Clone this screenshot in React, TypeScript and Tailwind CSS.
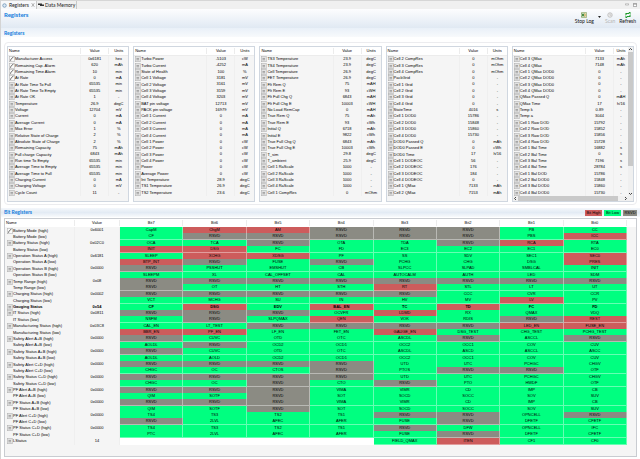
import { clsx } from "clsx"

type Reg = [name: string, value: string, units: string]

const REGISTERS: Reg[][] = [
  [
    ["Manufacturer Access", "0x6181", "hex"],
    ["Remaining Cap. Alarm", "620", "mAh"],
    ["Remaining Time Alarm", "10", "min"],
    ["At Rate", "0", "mA"],
    ["At Rate Time To Full", "65535", "min"],
    ["At Rate Time To Empty", "65535", "min"],
    ["At Rate OK", "1", "-"],
    ["Temperature", "26.9", "degC"],
    ["Voltage", "12704", "mV"],
    ["Current", "0", "mA"],
    ["Average Current", "0", "mA"],
    ["Max Error", "1", "%"],
    ["Relative State of Charge", "2", "%"],
    ["Absolute State of Charge", "2", "%"],
    ["Remaining Capacity", "75", "mAh"],
    ["Full charge Capacity", "6843", "mAh"],
    ["Run time To Empty", "65535", "min"],
    ["Average Time to Empty", "65535", "min"],
    ["Average Time to Full", "65535", "min"],
    ["Charging Current", "0", "mA"],
    ["Charging Voltage", "0", "mV"],
    ["Cycle Count", "11", "-"],
  ],
  [
    ["Turbo Power", "-5103", "cW"],
    ["Turbo Current", "-4252", "mA"],
    ["State of Health", "100", "%"],
    ["Cell 1 Voltage", "3181", "mV"],
    ["Cell 2 Voltage", "3161", "mV"],
    ["Cell 3 Voltage", "3159", "mV"],
    ["Cell 4 Voltage", "3203", "mV"],
    ["BAT pin voltage", "12713", "mV"],
    ["PACK pin voltage", "16979", "mV"],
    ["Cell 1 Current", "0", "mA"],
    ["Cell 2 Current", "0", "mA"],
    ["Cell 3 Current", "0", "mA"],
    ["Cell 4 Current", "0", "mA"],
    ["Cell 1 Power", "0", "cW"],
    ["Cell 2 Power", "0", "cW"],
    ["Cell 3 Power", "0", "cW"],
    ["Cell 4 Power", "0", "cW"],
    ["Power", "0", "cW"],
    ["Average Power", "0", "cW"],
    ["Int Temperature", "28.9", "degC"],
    ["TS1 Temperature", "26.9", "degC"],
    ["TS2 Temperature", "23.6", "degC"],
  ],
  [
    ["TS3 Temperature", "23.9", "degC"],
    ["TS4 Temperature", "23.9", "degC"],
    ["Cell Temperature", "26.9", "degC"],
    ["FET Temperature", "26.9", "degC"],
    ["Flt Rem Q", "75", "mAH"],
    ["Flt Rem E", "93", "cWH"],
    ["Flt Full Chg Q", "6843", "mAH"],
    ["Flt Full Chg E", "10003", "cWH"],
    ["No Load RemCap", "0", "mAH"],
    ["True Rem Q", "75", "mAh"],
    ["True Rem E", "93", "cWh"],
    ["Initial Q", "6718", "mAh"],
    ["Initial E", "9822", "cWh"],
    ["True Full Chg Q", "6843", "mAh"],
    ["True Full Chg E", "10003", "cWh"],
    ["T_sim", "29.8", "degC"],
    ["T_ambient", "25.9", "degC"],
    ["Cell 1 RaScale", "1000", "-"],
    ["Cell 2 RaScale", "1000", "-"],
    ["Cell 3 RaScale", "1000", "-"],
    ["Cell 4 RaScale", "1000", "-"],
    ["Cell 1 CompRes", "0", "mOhm"],
  ],
  [
    ["Cell 2 CompRes", "0", "mOhm"],
    ["Cell 3 CompRes", "0", "mOhm"],
    ["Cell 4 CompRes", "0", "mOhm"],
    ["PackGrid", "0", "-"],
    ["Cell 1 Grid", "0", "-"],
    ["Cell 2 Grid", "0", "-"],
    ["Cell 3 Grid", "0", "-"],
    ["Cell 4 Grid", "0", "-"],
    ["StateTime", "4016", "s"],
    ["Cell 1 DOD0", "15786", "-"],
    ["Cell 2 DOD0", "15848", "-"],
    ["Cell 3 DOD0", "15860", "-"],
    ["Cell 4 DOD0", "15730", "-"],
    ["DOD0 Passed Q", "0", "mAh"],
    ["DOD0 Passed E", "0", "cWh"],
    ["DOD0 Time", "17", "h/16"],
    ["Cell 1 DODEOC", "56", "-"],
    ["Cell 2 DODEOC", "176", "-"],
    ["Cell 3 DODEOC", "184", "-"],
    ["Cell 4 DODEOC", "0", "-"],
    ["Cell 1 QMax", "7133", "mAh"],
    ["Cell 2 QMax", "7153", "mAh"],
  ],
  [
    ["Cell 3 QMax", "7133", "mAh"],
    ["Cell 4 QMax", "7148", "mAh"],
    ["Cell 1 QMax DOD0", "0", "-"],
    ["Cell 2 QMax DOD0", "0", "-"],
    ["Cell 3 QMax DOD0", "0", "-"],
    ["Cell 4 QMax DOD0", "0", "-"],
    ["QMax Passed Q", "0", "mAH"],
    ["QMax Time", "17", "h/16"],
    ["Temp k", "0.89", "-"],
    ["Temp a", "3044", "-"],
    ["Cell 1 Raw DOD", "15792", "-"],
    ["Cell 2 Raw DOD", "15852", "-"],
    ["Cell 3 Raw DOD", "15856", "-"],
    ["Cell 4 Raw DOD", "15728", "-"],
    ["Cell 1 Bal Time", "16882", "s"],
    ["Cell 2 Bal Time", "0", "s"],
    ["Cell 3 Bal Time", "7196", "s"],
    ["Cell 4 Bal Time", "28784", "s"],
    ["Cell 1 Bal DOD", "15786", "-"],
    ["Cell 2 Bal DOD0", "15848", "-"],
    ["Cell 3 Bal DOD0", "15860", "-"],
    ["Cell 4 Bal DOD0", "15730", "-"],
  ],
]

// name | value | bits 7..0, "!" marks a bit that is set, "." an unused one
const BIT_ROWS = [
  "Battery Mode (high)|0x6001|CapM !ChgM !AM RSVD RSVD RSVD PB CC",
  "Battery Mode (low)||CF RSVD RSVD RSVD RSVD RSVD PBS !ICC",
  "Battery Status (high)|0x02C0|OCA TCA RSVD OTA TDA RSVD !RCA RTA",
  "Battery Status (low)||!INIT !DSG FC FD EC3 EC2 EC1 EC0",
  "Operation Status A (high)|0x6181|SLEEP !XCHG !XDSG PF SS SDV SEC1 !SEC0",
  "Operation Status A (low)||!BTP_INT RSVD FUSE RSVD PCHG CHG DSG !PRES",
  "Operation Status B (high)|0x0000|RSVD PSSHUT EMSHUT CB SLPCC SLPAD SMBLCAL INIT",
  "Operation Status B (low)||SLEEPM XL CAL_OFFSET CAL AUTOCALM AUTH LED SDM",
  "Temp Range (high)|0x08|RSVD RSVD RSVD RSVD RSVD RSVD RSVD RSVD",
  "Temp Range (low)||RSVD OT HT STH !RT STL LT UT",
  "Charging Status (high)|0x0002|RSVD RSVD RSVD RSVD RSVD CCC CVR CCR",
  "Charging Status (low)||VCT MCHG SU IN HV MV !LV PV",
  "Gauging Status|0x54|CF !DSG EDV !BAL_EN TC !TD FC FD",
  "IT Status (high)|0x0811|RSVD RSVD RSVD OCVFR !LDMD RX QMAX VDQ",
  "IT Status (low)||NSFM RSVD SLPQMAX !QEN VOK RDIS RSVD !REST",
  "Manufacturing Status (high)|0x03C8|CAL_EN LT_TEST RSVD RSVD RSVD RSVD !LED_EN !FUSE_EN",
  "Manufacturing Status (low)||!BBR_EN !PF_EN LF_EN FET_EN !GAUGE_EN DSG_TEST CHG_TEST PCHG_TEST",
  "Safety Alert A+B (high)|0x0000|RSVD CUVC OTD OTC ASCDL RSVD ASCCL RSVD",
  "Safety Alert A+B (low)||AOLDL RSVD OCD2 OCD1 OCC2 OCC1 COV CUV",
  "Safety Status A+B (high)|0x0000|RSVD CUVC OTD OTC ASCDL ASCD ASCCL ASCC",
  "Safety Status A+B (low)||AOLDL AOLD OCD2 OCD1 OCC2 OCC1 COV CUV",
  "Safety Alert C+D (high)|0x0000|RSVD RSVD RSVD RSVD UTD UTC PCHGC CHGV",
  "Safety Alert C+D (low)||CHGC OC CTOS RSVD PTOS RSVD RSVD OTF",
  "Safety Status C+D (high)|0x0000|RSVD RSVD RSVD RSVD UTD UTC PCHGC CHGV",
  "Safety Status C+D (low)||CHGC OC RSVD CTO RSVD PTO HWDF OTF",
  "PF Alert A+B (high)|0x0000|RSVD RSVD RSVD VIMA VIMR CD IMP CB",
  "PF Alert A+B (low)||QIM SOTF RSVD SOT SOCD SOCC SOV SUV",
  "PF Status A+B (high)|0x0000|RSVD RSVD RSVD VIMA VIMR CD IMP CB",
  "PF Status A+B (low)||QIM SOTF RSVD SOT SOCD SOCC SOV SUV",
  "PF Alert C+D (high)|0x0000|TS4 TS3 TS2 TS1 RSVD RSVD OPNCELL RSVD",
  "PF Alert C+D (low)||RSVD 2LVL AFEC AFER FUSE RSVD DFETF CFETF",
  "PF Status C+D (high)|0x0000|TS4 TS3 TS2 TS1 RSVD DFW OPNCELL IFC",
  "PF Status C+D (low)||PTC 2LVL AFEC AFER FUSE RSVD DFETF CFETF",
  "LStatus|14|. . . . FIELD_QMAX !ITEN CF1 CF0",
].map((line) => {
  const [name, value, bits] = line.split("|")
  return { name, value, bits: bits.split(" ") }
})

function ReadIcon() {
  return (
    <svg viewBox="0 0 12 12" className="w-1.5 h-1.5 shrink-0">
      <rect x="0.5" y="0.5" width="10" height="11" fill="#e2e2e2" stroke="#adadad" />
      <path d="M3 5h5M3 7.5h5" stroke="#858585" strokeWidth="1.3" />
    </svg>
  )
}

function EditIcon() {
  return (
    <svg viewBox="0 0 12 12" className="w-1.5 h-1.5 shrink-0">
      <rect x="0.5" y="0.5" width="10" height="11" fill="#fafafa" stroke="#a8a8a8" />
      <path d="M3 9.5l1-3L9 1.5" stroke="#444" strokeWidth="1.6" fill="none" />
    </svg>
  )
}

function Chevron({ d }: { d: string }) {
  return (
    <svg viewBox="0 0 10 10" className="w-[5px] h-[5px] shrink-0">
      <path d={d} fill="none" stroke="#444" strokeWidth="2" />
    </svg>
  )
}

function RegisterTable({ rows, editable, scroll }: { rows: Reg[]; editable: number; scroll?: boolean }) {
  const cols = scroll ? "grid-cols-[minmax(0,1fr)_29px_14px]" : "grid-cols-[minmax(0,1fr)_29px_19px]"
  return (
    <div className="flex flex-col min-w-0 border border-[#d0d7e0] bg-[#f5f5f5]">
      <div className="flex flex-1">
        <table className="flex-1 min-w-0 flex flex-col">
          <thead className="block bg-white border-b border-[#ececec]">
            <tr className={clsx("grid h-2 items-center", cols)}>
              <th className="font-normal text-left pl-px">Name</th>
              <th className="font-normal text-center border-x border-[#ececec]">Value</th>
              <th className="font-normal text-center">Units</th>
            </tr>
          </thead>
          <tbody className="grid auto-rows-fr h-[140px]">
            {rows.map(([name, value, units], i) => (
              <tr key={name} className={clsx("grid min-h-0", cols)}>
                <td className="flex items-center pl-px">
                  {i < editable ? <EditIcon /> : <ReadIcon />}
                  {name}
                </td>
                <td className="text-center border-x border-[#efefef]">{value}</td>
                <td className="text-center">{units}</td>
              </tr>
            ))}
          </tbody>
        </table>
        {scroll && (
          <div className="w-[5px] flex flex-col items-center bg-[#f0f0f0]">
            <Chevron d="M2 6l3-3 3 3" />
            <div className="w-full h-[114px] bg-[#c9c9c9]" />
            <div className="flex-1" />
            <Chevron d="M2 4l3 3 3-3" />
          </div>
        )}
      </div>
      {scroll ? (
        <div className="h-[5px] flex items-center bg-[#f0f0f0] pr-[5px]">
          <Chevron d="M6 2L3 5l3 3" />
          <div className="h-full w-[100px] bg-[#c9c9c9]" />
          <div className="flex-1" />
          <Chevron d="M4 2l3 3-3 3" />
        </div>
      ) : (
        <div className="h-[5px]" />
      )}
    </div>
  )
}

function bitColor(bit: string) {
  if (bit === ".") return "bg-white"
  if (bit === "RSVD") return "bg-[#8b8b83]"
  return bit.startsWith("!") ? "bg-[#cd5c5c]" : "bg-[#00ff80]"
}

function BitTable() {
  const cols = "grid-cols-[69px_46px_repeat(8,minmax(0,1fr))_9px]"
  return (
    <table className="flex flex-col mx-[3px] mt-px pb-3 border border-[#c9ccd1] bg-[#f5f5f5]">
      <thead className="block bg-white">
        <tr className={clsx("grid h-2 items-center", cols)}>
          <th className="font-normal text-left pl-px">Name</th>
          <th className="font-normal text-center border-x border-[#ececec]">Value</th>
          {[7, 6, 5, 4, 3, 2, 1, 0].map((n) => (
            <th key={n} className="font-normal text-center border-r border-[#ececec]">Bit{n}</th>
          ))}
        </tr>
      </thead>
      <tbody className="grid auto-rows-fr h-[217px]">
        {BIT_ROWS.map(({ name, value, bits }, row) => (
          <tr key={name} className={clsx("grid min-h-0", cols, name === "Gauging Status" && "font-bold")}>
            <td className={clsx("flex items-center", value ? "pl-0.5" : "pl-2")}>
              {value && (row === 0 ? <EditIcon /> : <ReadIcon />)}
              {name}
            </td>
            <td className="text-center border-x border-[#efefef]">{value}</td>
            {bits.map((bit, i) => (
              <td key={i} className={clsx("text-center border-r border-b", bit === "." ? "border-white" : "border-white/40", bitColor(bit))}>
                {bit.replace(/[!.]/, "")}
              </td>
            ))}
          </tr>
        ))}
      </tbody>
    </table>
  )
}

export default function App() {
  return (
    <div className="min-h-screen bg-white border-l border-[#d4d4d4] font-['Liberation_Sans',Arial,sans-serif] text-[4px] leading-[6px] text-black whitespace-nowrap">
      {/* Tabs */}
      <div className="flex items-stretch h-[9px] bg-[#f0f0f0] border-t border-[#d6d6d6] font-['Lato',sans-serif] text-[5px] leading-[8px] text-[#222]">
        <button className="flex items-center gap-0.5 px-px bg-[#f7f8fa]">
          <svg viewBox="0 0 10 10" className="w-[5px] h-[5px]">
            <circle cx="5" cy="5" r="3.5" fill="#dce9f5" stroke="#6f93b5" strokeWidth="1.6" />
          </svg>
          Registers
          <svg viewBox="0 0 10 10" className="w-1 h-1">
            <path d="M2 1l6 8M8 1L2 9" stroke="#888" strokeWidth="2.4" />
            <path d="M2 1l6 8M8 1L2 9" stroke="#fff" strokeWidth="0.8" />
          </svg>
        </button>
        <button className="flex items-center gap-px px-px border-x border-[#c8c8c8]">
          <svg viewBox="0 0 12 8" className="w-[6px] h-1">
            <path d="M0 1h8v2h4v3H4V4H0z" fill="#333" />
          </svg>
          Data Memory
        </button>
        <div className="flex flex-1 items-center justify-end gap-1 pr-[3px]">
          <button aria-label="Minimize">
            <svg viewBox="0 0 10 10" className="w-1 h-1"><path d="M1 2h8v3H1z" fill="#fff" stroke="#777" /></svg>
          </button>
          <button aria-label="Maximize">
            <svg viewBox="0 0 10 10" className="w-1 h-1"><path d="M1 1h8v8H1zM1 3h8" fill="#fff" stroke="#777" strokeWidth="1.5" /></svg>
          </button>
        </div>
      </div>

      {/* Title and actions */}
      <header className="flex items-start justify-between h-[19px] px-[3px] bg-linear-to-b from-[#fdfdfe] to-[#e0e9f3] font-['Lato',sans-serif]">
        <h1 className="text-[6px] leading-[12px] font-bold text-[#0f7bdc]">Registers</h1>
        <div className="flex items-start gap-1 pt-[3px] pr-px text-[5px] leading-[6px] text-[#111]">
          <button className="flex flex-col items-center">
            <svg viewBox="0 0 12 12" className="w-[6px] h-[6px]">
              <path d="M1 1h10v10H1z" fill="#e8f0d8" stroke="#6c8a3c" />
              <path d="M2 3l4 6M6 3L2 9" stroke="#2f7d32" strokeWidth="2" />
              <path d="M8 3v6" stroke="#c78f2a" strokeWidth="2" />
            </svg>
            Stop Log
          </button>
          <button aria-label="Log options" className="pt-1">
            <svg viewBox="0 0 6 4" className="w-[3px] h-0.5"><path d="M0 0h6L3 4z" fill="#222" /></svg>
          </button>
          <button className="flex flex-col items-center text-[#b5b5b5]">
            <svg viewBox="0 0 12 12" className="w-[6px] h-[6px]">
              <circle cx="6" cy="6" r="4.5" fill="#ededed" stroke="#b5b5b5" strokeWidth="1.5" />
              <path d="M6 3v3.5h3" fill="none" stroke="#b5b5b5" strokeWidth="1.2" />
            </svg>
            Scan
          </button>
          <button className="flex flex-col items-center">
            <svg viewBox="0 0 12 12" className="w-[6px] h-[6px]">
              <path d="M2 6V3h6M10 6v3H4" fill="none" stroke="#1f9a2c" strokeWidth="2.2" />
              <path d="M7 0h4v6zM5 12H1V6z" fill="#1f9a2c" />
            </svg>
            Refresh
          </button>
        </div>
      </header>

      <h2 className="h-[9px] px-[3px] bg-linear-to-b from-[#e9f0f8] to-[#f8fafc] font-['Lato',sans-serif] text-[5px] leading-[10px] font-bold text-[#0f7bdc]">Registers</h2>

      <section className="mx-[3px] mt-[5px] px-0.5 pt-[3px] pb-0.5 border border-[#ececef] rounded-sm grid grid-cols-5 gap-1">
        {REGISTERS.map((rows, i) => (
          <RegisterTable key={i} rows={rows} editable={i === 0 ? 4 : 0} scroll={i === 4} />
        ))}
      </section>

      {/* Bit registers */}
      <div className="flex items-center justify-between mt-[3px] h-[9px] px-[3px] bg-linear-to-b from-[#f4f7fb] via-[#e3ebf4] to-[#f8fafc]">
        <h2 className="font-['Lato',sans-serif] text-[5px] leading-[9px] font-bold text-[#0f7bdc]">Bit Registers</h2>
        <div className="flex gap-0.5 text-center">
          <span className="w-[17px] bg-[#cd5c5c]">Bit High</span>
          <span className="w-[17px] bg-[#00ff80]">Bit Low</span>
          <span className="w-[14px] bg-[#8b8b83]">RSVD</span>
        </div>
      </div>
      <BitTable />
    </div>
  )
}
